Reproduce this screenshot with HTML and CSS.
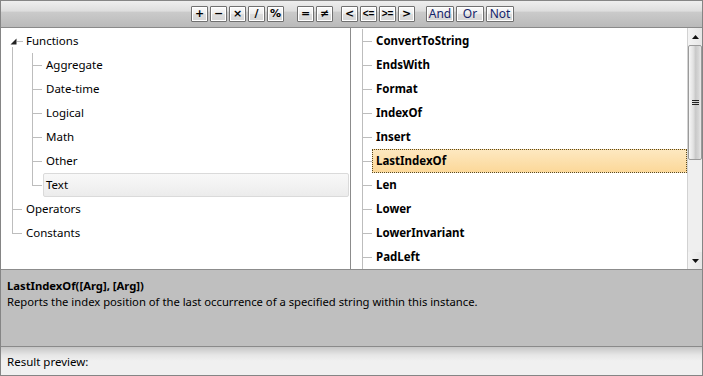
FILE: index.html
```html
<!DOCTYPE html>
<html lang="en">
<head>
    <meta charset="UTF-8">
    <title>Expression Editor</title>
    <link rel="stylesheet" href="styles.css">
</head>
<body>
    <div class="window">
        <!-- Operator buttons -->
        <div class="toolbar">
            <div class="btn-group">
                <button class="op">+</button>
                <button class="op">&minus;</button>
                <button class="op">&times;</button>
                <button class="op">/</button>
                <button class="op">%</button>
            </div>
            <div class="btn-group group-eq">
                <button class="op">=</button>
                <button class="op">&ne;</button>
            </div>
            <div class="btn-group group-cmp">
                <button class="op">&lt;</button>
                <button class="op pair">&lt;=</button>
                <button class="op pair">&gt;=</button>
                <button class="op">&gt;</button>
            </div>
            <div class="btn-group group-logic">
                <button class="op word">And</button>
                <button class="op word">Or</button>
                <button class="op word">Not</button>
            </div>
        </div>

        <div class="main">
            <!-- Category tree -->
            <div class="tree-pane">
                <div class="row">
                    <span class="guide root-open">
                        <svg width="7" height="7" viewBox="0 0 7 7"><polygon points="6.5,0.5 6.5,6.5 0.5,6.5" fill="#222"/></svg>
                    </span>
                    <span class="label">Functions</span>
                </div>
                <div class="row"><span class="guide line"></span><span class="guide sub tee"></span><span class="label">Aggregate</span></div>
                <div class="row"><span class="guide line"></span><span class="guide sub tee"></span><span class="label">Date-time</span></div>
                <div class="row"><span class="guide line"></span><span class="guide sub tee"></span><span class="label">Logical</span></div>
                <div class="row"><span class="guide line"></span><span class="guide sub tee"></span><span class="label">Math</span></div>
                <div class="row"><span class="guide line"></span><span class="guide sub tee"></span><span class="label">Other</span></div>
                <div class="row"><span class="guide line"></span><span class="guide sub ell"></span><span class="label selected">Text</span></div>
                <div class="row"><span class="guide tee"></span><span class="label">Operators</span></div>
                <div class="row"><span class="guide ell"></span><span class="label">Constants</span></div>
            </div>

            <!-- Function list -->
            <div class="list-pane">
                <div class="list">
                    <div class="row"><span class="guide tee"></span><span class="label">ConvertToString</span></div>
                    <div class="row"><span class="guide tee"></span><span class="label">EndsWith</span></div>
                    <div class="row"><span class="guide tee"></span><span class="label">Format</span></div>
                    <div class="row"><span class="guide tee"></span><span class="label">IndexOf</span></div>
                    <div class="row"><span class="guide tee"></span><span class="label">Insert</span></div>
                    <div class="row"><span class="guide tee"></span><span class="label current">LastIndexOf</span></div>
                    <div class="row"><span class="guide tee"></span><span class="label">Len</span></div>
                    <div class="row"><span class="guide tee"></span><span class="label">Lower</span></div>
                    <div class="row"><span class="guide tee"></span><span class="label">LowerInvariant</span></div>
                    <div class="row"><span class="guide tee"></span><span class="label">PadLeft</span></div>
                </div>
                <div class="scrollbar">
                    <div class="sb-btn">
                        <svg width="7" height="4" viewBox="0 0 7 4"><polygon points="3.5,0 7,4 0,4" fill="#111"/></svg>
                    </div>
                    <div class="sb-thumb">
                        <span class="grip"></span>
                    </div>
                    <div class="sb-track"></div>
                    <div class="sb-btn">
                        <svg width="7" height="4" viewBox="0 0 7 4"><polygon points="0,0 7,0 3.5,4" fill="#111"/></svg>
                    </div>
                </div>
            </div>
        </div>

        <!-- Description of the selected function -->
        <div class="desc">
            <div class="desc-title">LastIndexOf([Arg], [Arg])</div>
            <div>Reports the index position of the last occurrence of a specified string within this instance.</div>
        </div>

        <div class="result">Result preview:</div>
    </div>
</body>
</html>
```

FILE: styles.css
```css
* {
    margin: 0;
    padding: 0;
    box-sizing: border-box;
}

body {
    font-family: "Noto Sans", "Open Sans", sans-serif;
    font-size: 11.5px;
    color: #000;
    background: #fff;
}

.window {
    width: 703px;
    height: 376px;
    border: 1px solid #858585;
    display: flex;
    flex-direction: column;
}

/* Toolbar */
.toolbar {
    height: 27px;
    flex: none;
    display: flex;
    justify-content: center;
    align-items: center;
    padding: 0 0 1px 2px;
    border-bottom: 1px solid #8a8a8a;
    background: linear-gradient(#eeeeee, #dedede 38%, #cacaca 44%, #bababa);
}

.btn-group {
    display: flex;
    gap: 2px;
}

.group-eq {
    margin-left: 13px;
}

.group-cmp {
    margin-left: 8px;
}

.group-logic {
    margin-left: 11px;
}

.op {
    width: 17px;
    height: 16px;
    padding: 0;
    border: 1px solid #707070;
    border-radius: 1px;
    background: linear-gradient(#fbfbfb, #ececec 50%, #dedede 52%, #d6d6d6);
    box-shadow: inset 0 0 0 1px #fff;
    font-family: "DejaVu Sans", sans-serif;
    font-size: 11px;
    font-weight: bold;
    line-height: 13px;
    color: #000;
    display: flex;
    align-items: center;
    justify-content: center;
}

.op.pair {
    font-family: "Liberation Sans", sans-serif;
    font-size: 10px;
    letter-spacing: 0;
}

.op.word {
    width: 28px;
    font-family: "Noto Sans", sans-serif;
    font-size: 12px;
    font-weight: normal;
    color: #14246a;
}

/* Main panes */
.main {
    height: 242px;
    flex: none;
    display: flex;
    border-bottom: 1px solid #8c8c8c;
}

.tree-pane {
    width: 350px;
    border-right: 1px solid #8c8c8c;
    padding-top: 1px;
}

.list-pane {
    flex: 1;
    display: flex;
}

.list {
    flex: 1;
    padding-top: 1px;
    overflow: hidden;
}

.row {
    height: 24px;
    display: flex;
}

.label {
    flex: 1;
    line-height: 22px;
    padding: 0 2px;
    border: 1px solid transparent;
    margin-right: 1px;
}

.list .label {
    font-weight: bold;
    padding-left: 3px;
    margin-right: 0;
}

.label.selected {
    border-color: #dadada;
    border-radius: 2px;
    background: linear-gradient(#f8f8f8, #ececec);
}

.label.current {
    border: 1px dotted #5a4a20;
    background: linear-gradient(#fde8c0, #fcd899);
}

/* Tree connector lines */
.guide {
    width: 22px;
    flex: none;
    background-repeat: no-repeat;
}

.guide.sub {
    width: 20px;
}

.list .guide {
    width: 21px;
}

.guide.line {
    background-image: linear-gradient(#bdbdbd, #bdbdbd);
    background-position: 11px 0;
    background-size: 1px 100%;
}

.guide.tee {
    background-image: linear-gradient(#bdbdbd, #bdbdbd), linear-gradient(#bdbdbd, #bdbdbd);
    background-position: 11px 0, 11px 12px;
    background-size: 1px 100%, 10px 1px;
}

.guide.ell {
    background-image: linear-gradient(#bdbdbd, #bdbdbd), linear-gradient(#bdbdbd, #bdbdbd);
    background-position: 11px 0, 11px 12px;
    background-size: 1px 13px, 10px 1px;
}

.guide.sub.tee,
.guide.sub.ell {
    background-position: 9px 0, 9px 12px;
}

.guide.root-open {
    display: flex;
    align-items: center;
    padding-left: 9px;
    background-image: linear-gradient(#bdbdbd, #bdbdbd), linear-gradient(#bdbdbd, #bdbdbd);
    background-position: 11px 18px, 16px 12px;
    background-size: 1px 100%, 6px 1px;
}

/* Scrollbar */
.scrollbar {
    width: 15px;
    flex: none;
    display: flex;
    flex-direction: column;
    border-left: 1px solid #d2d2d2;
    background: #efefef;
}

.sb-btn {
    height: 17px;
    display: flex;
    align-items: center;
    justify-content: center;
    background: linear-gradient(to right, #f4f4f4, #e6e6e6);
}

.sb-thumb {
    height: 115px;
    border: 1px solid #9a9a9a;
    border-radius: 2px;
    background: linear-gradient(to right, #f6f6f6, #e2e2e2 35%, #c9c9c9 55%, #d6d6d6 80%, #e8e8e8);
    display: flex;
    align-items: center;
    justify-content: center;
}

.grip {
    width: 7px;
    height: 5px;
    border-top: 1px solid #222;
    border-bottom: 1px solid #222;
    background: linear-gradient(#222, #222) 0 1px / 100% 1px no-repeat;
}

.sb-track {
    flex: 1;
}

/* Description */
.desc {
    height: 77px;
    flex: none;
    padding: 8px 6px 0;
    font-size: 11.25px;
    line-height: 16px;
    background: #bfbfbf;
    border-bottom: 1px solid #8a8a8a;
}

.desc-title {
    font-weight: bold;
}

.result {
    flex: 1;
    padding: 7px 6px 0;
    line-height: 16px;
    background: linear-gradient(#c6c6c6, #e6e6e6 8px, #f0f0f0 14px);
}
```
